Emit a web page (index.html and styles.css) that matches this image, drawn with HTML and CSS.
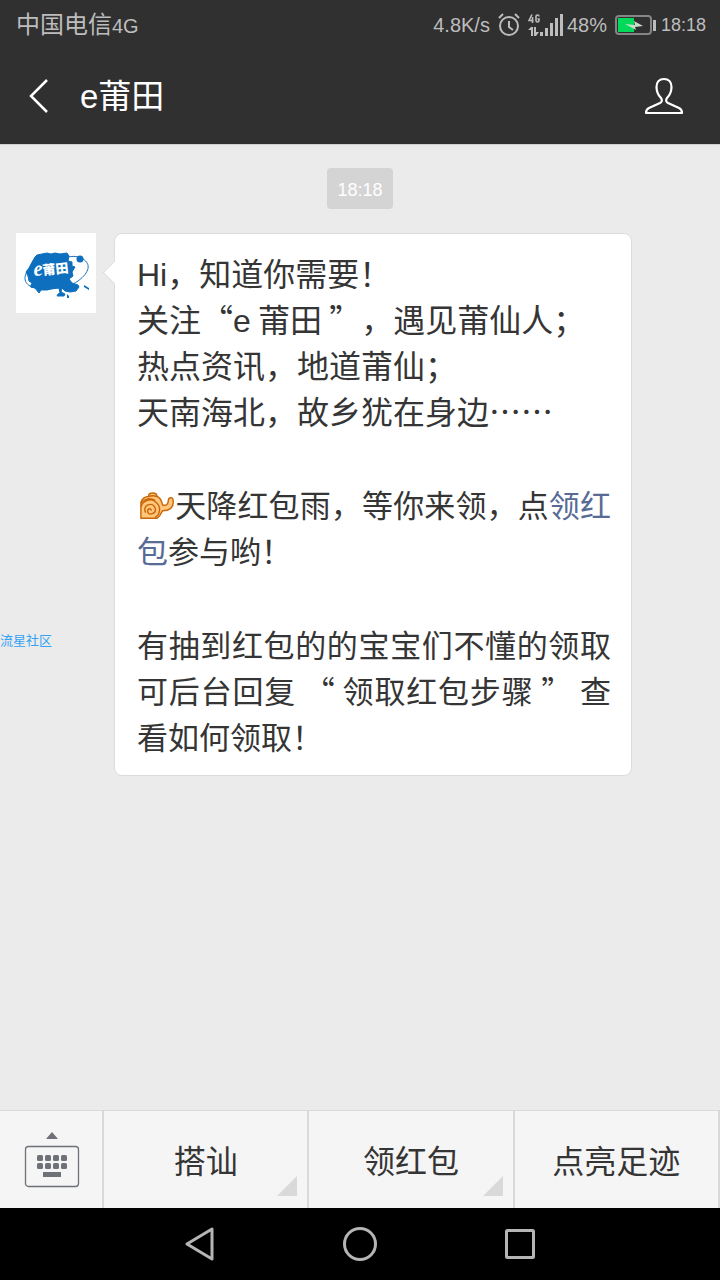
FILE: index.html
```html
<!DOCTYPE html>
<html lang="zh-CN">
<head>
<meta charset="utf-8">
<meta name="viewport" content="width=device-width, initial-scale=1">
<title>e莆田</title>
<link rel="stylesheet" href="styles.css">
</head>
<body>
<div class="status">
  <span class="carrier">中国电信<span class="network">4G</span></span>
  <div class="indicators">
    <span class="speed">4.8K/s</span>
    <svg class="alarm" width="22" height="24" viewBox="0 0 22 24" fill="none" stroke="#bdbdbd" stroke-width="2"><circle cx="11" cy="13" r="9"/><path d="M11 8v6l4 3M1 5l4-4M21 5l-4-4"/></svg>
    <svg class="signal" width="36" height="24" viewBox="0 0 36 24" fill="#bdbdbd"><path d="M12 19h3v4h-3zM17 15h3v8h-3zM22 10h3v13h-3zM27 5h3v18h-3zM32 1h3v22h-3z"/><path d="M4 1.500L1 7.500h4.500M4.500 4v6M11 3.500Q11 2 9.500 2T8 3.500v4Q8 9 9.500 9T11 7.500V6H9.500" fill="none" stroke="#bdbdbd" stroke-width="1.600"/><path d="M0 17l3-3h2v9H3v-6zM6 14h2v5h3l-3 4H6z"/></svg>
    <span class="percent">48%</span>
    <svg class="battery" width="42" height="20" viewBox="0 0 42 20"><rect x="1" y="1" width="35" height="18" rx="3" fill="none" stroke="#858585" stroke-width="2"/><path fill="#00d95a" d="M3 3h16v14H3z"/><path fill="#c4ddcb" d="M10 9l10 1-1-4 9 5-8 1 1 3z"/><path fill="#bdbdbd" d="M38 5h3v11h-3z"/></svg>
    <span class="clock">18:18</span>
  </div>
</div>
<header class="header">
  <button class="icon-button" aria-label="返回"><svg width="22" height="36" viewBox="0 0 22 36" fill="none" stroke="#fff" stroke-width="2.500"><path d="M19 2L3 18l16 16"/></svg></button>
  <h1 class="title">e莆田</h1>
  <button class="icon-button" aria-label="账号资料"><svg width="40" height="38" viewBox="0 0 40 38" fill="none" stroke="#fff" stroke-width="2.200" stroke-linejoin="round"><path d="M20 2c-5 0-7.500 3-7.500 8 0 5 1.500 8 4.500 11 1.500 2 1 4-1 5L5 31c-3 1.500-3 3-3 5h36c0-2 0-3.500-3-5l-11-5c-2-1-2.500-3-1-5 3-3 4.500-6 4.500-11 0-5-2.500-8-7.500-8z"/></svg></button>
</header>
<main class="chat">
  <time class="stamp">18:18</time>
  <div class="message">
    <svg class="avatar" width="80" height="80" viewBox="0 0 80 80" role="img" aria-label="e莆田">
      <path fill="#fff" d="M0 0h80v80H0z"/>
      <path d="M16 33C7 41 7 49 14 53c8 5 36 4 48-5 12-9 13-17 5-22-4-3-10-3-15-2" fill="none" stroke="#1a72b8" stroke-width="1"/>
      <path fill="#0d6fbd" stroke="#0d6fbd" stroke-linejoin="round" d="M19 24l2-2 5-1 5-1 4 1 4-1 5 1 7-1 2 3-1 5 4 1 0 4 3 1-3 5 1 4-4 3 3 4 6 2 1 2-3 4-6 1-5-1-3-3-1 4 4 2-1 2-3 0-4 0 1-2 2-1-1-5-4 0-8 2-6 0-2 3-4-5-4-1 1-4-3-2-1-5-2-4 3-4 2-4z"/>
      <circle cx="64" cy="26" r="3.500" fill="#0d6fbd"/><circle cx="16" cy="53" r="1.800" fill="#0d6fbd"/>
      <path fill="#0d6fbd" d="M68 52l5 3v2l-5-3zM51 61l2 2v2h-2z"/>
      <text class="logo-text" x="27" y="42" transform="rotate(-6 27 42)">莆田</text>
      <text class="logo-e" x="18" y="43" transform="rotate(-6 18 43)">e</text>
    </svg>
    <div class="bubble">
      <p class="greeting"><span class="latin">Hi</span>，知道你需要！<br>关注“<span class="latin">e</span> 莆田 ”，遇见莆仙人；<br>热点资讯，地道莆仙；<br>天南海北，故乡犹在身边……</p>
      <p><svg class="emoji" width="36" height="30" viewBox="0 0 38 30" fill="#ffc67c" stroke="#c96708" stroke-width="1.500" stroke-linejoin="round"><path d="M10 5c0-5 9-5 9 0 4 1 5 5 6 9 4 1 6-1 6-5 0-3 5-4 5 0 1 7-3 11-11 11l-3 5-3 3H2V11c1-4 5-6 8-6z"/><path fill="none" d="M10 5c3-1 6-1 9 0M2 16c2-7 11-10 16-5 6 5 4 13-1 16M7 22c-4-8 7-12 10-5 2 6-7 9-8 4 0-4 4-4 4-1M2 12c4-5 10-6 15-3"/></svg>天降红包雨，等你来领，点<a href="#">领红包</a>参与哟！</p>
      <p>有抽到红包的的宝宝们不懂的领取可后台回复 “ 领取红包步骤 ” 查看如何领取！</p>
    </div>
  </div>
  <span class="watermark">流星社区</span>
</main>
<nav class="menu">
  <button class="keyboard" aria-label="切换键盘"><svg width="56" height="58" viewBox="0 0 56 58" fill="#6e7177"><path d="M22 8l6-7 6 7z"/><rect x="1.500" y="15.500" width="53" height="40" rx="3" fill="none" stroke="#6e7177" stroke-width="1.300"/><path d="M19 41h18v5H19z"/><g><rect x="13" y="24" width="6" height="6" rx="1.500"/><rect x="21" y="24" width="6" height="6" rx="1.500"/><rect x="29" y="24" width="6" height="6" rx="1.500"/><rect x="37" y="24" width="6" height="6" rx="1.500"/><rect x="13" y="32" width="6" height="6" rx="1.500"/><rect x="21" y="32" width="6" height="6" rx="1.500"/><rect x="29" y="32" width="6" height="6" rx="1.500"/><rect x="37" y="32" width="6" height="6" rx="1.500"/></g></svg></button>
  <button class="item has-more">搭讪</button>
  <button class="item has-more">领红包</button>
  <button class="item">点亮足迹</button>
</nav>
<div class="system">
  <button aria-label="后退"><svg width="36" height="36" viewBox="0 0 36 36"><path d="M5 18L30 3v30z"/></svg></button>
  <button aria-label="主屏幕"><svg width="36" height="36" viewBox="0 0 36 36"><circle cx="18" cy="18" r="15.500"/></svg></button>
  <button aria-label="最近任务"><svg width="36" height="36" viewBox="0 0 36 36"><rect x="4.500" y="4.500" width="27" height="27" rx="1"/></svg></button>
</div>
</body>
</html>
```
FILE: styles.css
```css
* {
  box-sizing: border-box;
}

body {
  margin: 0;
  min-height: 100vh;
  display: flex;
  flex-direction: column;
  background: #ebebeb;
  color: #353535;
  font-family: "Noto Sans CJK SC", sans-serif;
}

button {
  border: 0;
  padding: 0;
  background: none;
  color: inherit;
  font: inherit;
}

svg {
  flex: none;
}

.status {
  height: 48px;
  padding: 2px 14px 0 16px;
  display: flex;
  align-items: center;
  justify-content: space-between;
  background: #303030;
  color: #bdbdbd;
  font-family: "Liberation Sans", "Noto Sans CJK SC", sans-serif;
  font-size: 20px;
  line-height: 32px;
}

.carrier {
  font-size: 24px;
}

.network {
  font-size: 20px;
}

.indicators {
  display: flex;
  align-items: center;
}

.alarm {
  margin-left: 8px;
}

.signal {
  margin: 0 3px 0 8px;
}

.battery {
  margin: 0 4px 0 8px;
}

.clock {
  font-size: 18px;
}

.header {
  height: 97px;
  padding: 0 36px 0 28px;
  display: flex;
  align-items: center;
  background: #303030;
  border-bottom: 1px solid #d0d0d0;
  color: #fff;
}

.icon-button {
  display: flex;
}

.title {
  flex: 1;
  margin: 2px 0 0 30px;
  font-family: "Liberation Sans", "Noto Sans CJK SC", sans-serif;
  font-size: 33px;
  font-weight: 400;
  line-height: 44px;
}

.chat {
  position: relative;
  flex: 1;
  padding: 23px 88px 24px 16px;
  display: flex;
  flex-direction: column;
}

.stamp {
  align-self: center;
  margin-left: 72px;
  height: 41px;
  padding: 2px 10px 0;
  border-radius: 4px;
  background: #d4d4d4;
  color: #fff;
  font-family: "Liberation Sans", sans-serif;
  font-size: 18px;
  line-height: 41px;
}

.message {
  margin-top: 24px;
  display: flex;
  align-items: flex-start;
  gap: 18px;
}

.bubble {
  position: relative;
  flex: 1;
  padding: 15px 20px 16px 22px;
  border: 1px solid #dcdcdc;
  border-radius: 8px;
  background: #fff;
  font-size: 31px;
  line-height: 46px;
  text-align: justify;
}

.bubble::before {
  content: "";
  position: absolute;
  top: 30px;
  left: -9px;
  width: 16px;
  height: 16px;
  border: solid #dcdcdc;
  border-width: 0 0 1px 1px;
  background: #fff;
  transform: rotate(45deg);
}

.bubble p {
  margin: 0 0 48px;
}

.bubble p:last-child {
  margin-bottom: 0;
}

.bubble .greeting {
  font-size: 32px;
  text-align: left;
  text-spacing-trim: space-all;
}

.latin {
  font-family: "Liberation Sans", sans-serif;
  line-height: 1;
}

.bubble a {
  color: #576b95;
  text-decoration: none;
}

.emoji {
  margin-left: 2px;
  vertical-align: -4px;
}

.logo-text {
  fill: #fff;
  font-size: 13px;
  font-weight: 900;
}

.logo-e {
  fill: #fff;
  font-family: "Liberation Serif", serif;
  font-size: 21px;
  font-style: italic;
  font-weight: 700;
}

.watermark {
  position: absolute;
  top: 486px;
  left: 0;
  color: #35a2f5;
  font-size: 13px;
  line-height: 18px;
}

.menu {
  height: 98px;
  display: flex;
  border-top: 1px solid #d9d9d9;
  background: #f5f5f5;
}

.keyboard {
  width: 104px;
  padding-left: 2px;
  display: flex;
  align-items: center;
  justify-content: center;
  border-right: 2px solid #d9d9d9;
}

.item {
  position: relative;
  flex: 1;
  padding-bottom: 2px;
  border-right: 2px solid #d9d9d9;
  font-size: 32px;
}

.has-more::after {
  content: "";
  position: absolute;
  right: 10px;
  bottom: 12px;
  border: solid transparent;
  border-width: 10px;
  border-right-color: #d9d9d9;
  border-bottom-color: #d9d9d9;
}

.system {
  height: 72px;
  display: flex;
  align-items: center;
  justify-content: center;
  gap: 124px;
  background: #000;
}

.system button {
  display: flex;
}

.system svg {
  fill: none;
  stroke: #b5b5b5;
  stroke-width: 3px;
  stroke-linejoin: round;
}
```
